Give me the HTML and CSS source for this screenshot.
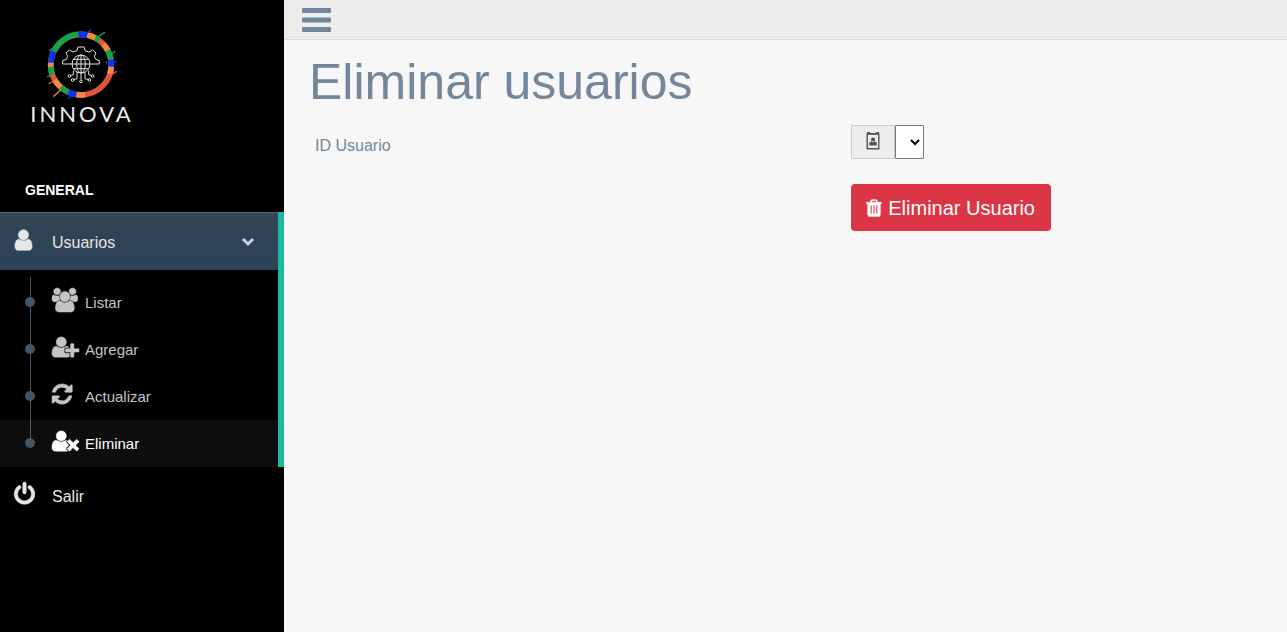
FILE: index.html
```html
<!DOCTYPE html>
<html lang="es">
<head>
<meta charset="utf-8">
<meta name="viewport" content="width=device-width, initial-scale=1">
<title>Eliminar usuarios</title>
<link rel="stylesheet" href="styles.css">
</head>
<body>
<div class="layout">
  <aside class="sidebar">
    <a class="brand" href="#">
      <svg class="brand-mark" viewBox="0 0 228 228" aria-hidden="true">
        <g class="ring" transform="rotate(-90 111 110)">
          <circle cx="111" cy="110" r="91" stroke="#e0553a"/>
          <circle cx="111" cy="110" r="91" stroke="#15a34a" pathLength="360" stroke-dasharray="60 300" stroke-dashoffset="-295"/>
          <circle cx="111" cy="110" r="91" stroke="#0b35f0" pathLength="360" stroke-dasharray="18 342" stroke-dashoffset="-355"/>
          <circle cx="111" cy="110" r="91" stroke="#0b35f0" pathLength="360" stroke-dasharray="12 348"/>
          <circle cx="111" cy="110" r="91" stroke="#ee8a45" pathLength="360" stroke-dasharray="17 343" stroke-dashoffset="-12"/>
          <circle cx="111" cy="110" r="91" stroke="#15a34a" pathLength="360" stroke-dasharray="9 351" stroke-dashoffset="-28"/>
          <circle cx="111" cy="110" r="91" stroke="#ee8a45" pathLength="360" stroke-dasharray="14 346" stroke-dashoffset="-48"/>
          <circle cx="111" cy="110" r="91" stroke="#15a34a" pathLength="360" stroke-dasharray="18 342" stroke-dashoffset="-62"/>
          <circle cx="111" cy="110" r="91" stroke="#0b35f0" pathLength="360" stroke-dasharray="14 346" stroke-dashoffset="-80"/>
          <circle cx="111" cy="110" r="91" stroke="#ee8a45" pathLength="360" stroke-dasharray="14 346" stroke-dashoffset="-94"/>
          <circle cx="111" cy="110" r="91" stroke="#ee8a45" pathLength="360" stroke-dasharray="17 343" stroke-dashoffset="-172"/>
          <circle cx="111" cy="110" r="91" stroke="#0b35f0" pathLength="360" stroke-dasharray="16 344" stroke-dashoffset="-189"/>
          <circle cx="111" cy="110" r="91" stroke="#15a34a" pathLength="360" stroke-dasharray="17 343" stroke-dashoffset="-205"/>
          <circle cx="111" cy="110" r="91" stroke="#ee8a45" pathLength="360" stroke-dasharray="18 342" stroke-dashoffset="-222"/>
          <circle cx="111" cy="110" r="91" stroke="#15a34a" pathLength="360" stroke-dasharray="16 344" stroke-dashoffset="-251"/>
          <circle cx="111" cy="110" r="91" stroke="#ee8a45" pathLength="360" stroke-dasharray="8 352" stroke-dashoffset="-266"/>
          <circle cx="111" cy="110" r="91" stroke="#0b35f0" pathLength="360" stroke-dasharray="22 338" stroke-dashoffset="-274"/>
        </g>
        <g class="splash">
          <path stroke="#0b35f0" d="M124 20 140 6M73 212 86 198M202 108 217 99"/>
          <path stroke="#15a34a" d="M160 28 182 13M200 80 213 70M17 67 28 60M11 146 20 142"/>
          <path stroke="#ee8a45" d="M29 205 50 186"/>
          <path stroke="#e0553a" d="M15 167 28 159M202 140 217 131"/>
        </g>
        <g class="device">
          <path d="M56 108V98l11-4 4-9-5-10 10-9 11 6 12-4 3-11h18l3 11 12 4 11-6 10 9-5 10 4 9 11 4v10H139M56 108H84"/>
          <circle cx="111" cy="108" r="27"/>
          <ellipse cx="111" cy="108" rx="13" ry="27"/>
          <path d="M111 81v73M84 108h54M88 94h46M88 122h46M99 132v20l-12 3M88 128v12l-10 3M123 132v20l12 3M134 128v12l10 3"/>
          <circle cx="76" cy="144" r="4"/><circle cx="86" cy="156" r="4"/><circle cx="111" cy="160" r="4"/><circle cx="136" cy="156" r="4"/><circle cx="146" cy="144" r="4"/>
        </g>
        <circle cx="187" cy="102" r="2" fill="#18c5d8"/>
      </svg>
      <span class="brand-name">INNOVA</span>
    </a>

    <nav class="menu">
      <h3 class="menu-title">General</h3>
      <ul class="menu-list">
        <li class="menu-group">
          <a class="menu-link menu-link-active" href="#">
            <svg class="icon icon-user" viewBox="192 0 1408 1792" aria-hidden="true"><path d="M1536 1399q0 109-62.500 187t-150.500 78h-854q-88 0-150.500-78t-62.500-187q0-85 8.500-160.500t31.500-152 58.500-131 94-89 134.500-34.500q131 128 313 128t313-128q76 0 134.500 34.500t94 89 58.500 131 31.500 152 8.500 160.500zm-256-887q0 159-112.500 271.500t-271.500 112.500-271.500-112.500-112.500-271.500 112.500-271.500 271.500-112.500 271.500 112.500 112.500 271.500z"/></svg>
            <span class="menu-text">Usuarios</span>
            <svg class="chevron" viewBox="0 0 14 10" aria-hidden="true"><path d="M2 2l5 5 5-5"/></svg>
          </a>
          <ul class="submenu">
            <li><a class="submenu-link" href="#">
              <svg class="icon" viewBox="-64 0 1920 1792" preserveAspectRatio="xMinYMin meet" aria-hidden="true"><path d="M529 896q-162 5-265 128h-134q-82 0-138-40.500t-56-118.500q0-353 124-353 6 0 43.500 21t97.500 42.500 119 21.500q67 0 133-23-5 37-5 66 0 139 81 256zm1071 637q0 120-73 189.500t-194 69.500h-874q-121 0-194-69.500t-73-189.500q0-53 3.500-103.500t14-109 26.500-108.500 43-97.500 62-81 85.500-53.500 111.500-20q10 0 43 21.500t73 48 107 48 135 21.500 135-21.500 107-48 73-48 43-21.500q61 0 111.500 20t85.500 53.500 62 81 43 97.500 26.500 108.500 14 109 3.500 103.500zm-1024-1277q0 106-75 181t-181 75-181-75-75-181 75-181 181-75 181 75 75 181zm704 384q0 159-112.500 271.500t-271.500 112.500-271.500-112.500-112.500-271.500 112.500-271.500 271.500-112.500 271.500 112.500 112.500 271.500zm576 225q0 78-56 118.500t-138 40.500h-134q-103-123-265-128 81-117 81-256 0-29-5-66 66 23 133 23 59 0 119-21.500t97.500-42.500 43.500-21q124 0 124 353zm-128-609q0 106-75 181t-181 75-181-75-75-181 75-181 181-75 181 75 75 181z"/></svg>
              <span>Listar</span></a></li>
            <li><a class="submenu-link" href="#">
              <svg class="icon" viewBox="0 0 2048 1792" aria-hidden="true"><path d="M704 896q-159 0-271.500-112.500t-112.500-271.500 112.500-271.500 271.500-112.500 271.500 112.500 112.500 271.500-112.500 271.500-271.500 112.500zm960 128h352q13 0 22.500 9.500t9.500 22.500v192q0 13-9.500 22.500t-22.500 9.500h-352v352q0 13-9.500 22.500t-22.500 9.500h-192q-13 0-22.500-9.500t-9.500-22.500v-352h-352q-13 0-22.500-9.500t-9.500-22.500v-192q0-13 9.500-22.500t22.500-9.500h352v-352q0-13 9.500-22.500t22.500-9.500h192q13 0 22.500 9.500t9.500 22.500v352zm-736 224q0 52 38 90t90 38h256v238q-68 50-171 50h-874q-121 0-194-69t-73-190q0-53 3.500-103.500t14-109 26.500-108.500 43-97.500 62-81 85.500-53.500 111.500-20q19 0 39 17 79 61 154.500 91.500t164.500 30.500 164.500-30.500 154.500-91.500q20-17 39-17 132 0 217 96h-223q-52 0-90 38t-38 90v192z"/></svg>
              <span>Agregar</span></a></li>
            <li><a class="submenu-link" href="#">
              <svg class="icon" viewBox="128 0 2048 1792" aria-hidden="true"><path d="M1639 1056q0 5-1 7-64 268-268 434.500t-478 166.500q-146 0-282.500-55t-243.500-157l-129 129q-19 19-45 19t-45-19-19-45v-448q0-26 19-45t45-19h448q26 0 45 19t19 45-19 45l-137 137q71 66 161 102t187 36q134 0 250-65t186-179q11-17 53-117 8-23 30-23h192q13 0 22.500 9.500t9.500 22.500zm25-800v448q0 26-19 45t-45 19h-448q-26 0-45-19t-19-45 19-45l138-138q-148-137-349-137-134 0-250 65t-186 179q-11 17-53 117-8 23-30 23h-199q-13 0-22.500-9.500t-9.500-22.500v-7q65-268 270-434.500t480-166.500q146 0 284 55.500t245 156.500l130-129q19-19 45-19t45 19 19 45z"/></svg>
              <span>Actualizar</span></a></li>
            <li><a class="submenu-link submenu-link-current" href="#" aria-current="page">
              <svg class="icon" viewBox="0 0 2048 1792" aria-hidden="true"><path d="M704 896q-159 0-271.500-112.500t-112.500-271.500 112.500-271.500 271.500-112.500 271.500 112.500 112.500 271.500-112.500 271.500-271.500 112.500zm1077 320l249 249q9 9 9 23 0 13-9 22l-136 136q-9 9-22 9-14 0-23-9l-249-249-249 249q-9 9-23 9-13 0-22-9l-136-136q-9-9-9-22 0-14 9-23l249-249-249-249q-9-9-9-23 0-13 9-22l136-136q9-9 22-9 14 0 23 9l249 249 249-249q9-9 23-9 13 0 22 9l136 136q9 9 9 22 0 14-9 23zm-498 0l-181 181q-37 37-37 91 0 53 37 90l83 83q-21 3-44 3h-874q-121 0-194-69t-73-190q0-53 3.500-103.500t14-109 26.500-108.500 43-97.500 62-81 85.500-53.500 111.500-20q19 0 39 17 79 61 154.500 91.500t164.500 30.500 164.500-30.500 154.500-91.500q20-17 39-17 25 0 50 4l-10 18q-37 37-37 90 0 54 37 91z"/></svg>
              <span>Eliminar</span></a></li>
          </ul>
        </li>
        <li>
          <a class="menu-link" href="#">
            <svg class="icon" viewBox="128 0 1536 1792" aria-hidden="true"><path d="M1664 896q0 156-61 298t-164 245-245 164-298 61-298-61-245-164-164-245-61-298q0-182 80.500-343t226.500-270q43-32 95.500-25t83.500 50q32 42 24.500 94.500t-49.500 84.500q-98 74-151.500 181t-53.500 228q0 104 40.500 198.500t109.500 163.500 163.500 109.500 198.500 40.500 198.500-40.500 163.500-109.500 109.500-163.500 40.500-198.500q0-121-53.500-228t-151.500-181q-42-32-49.500-84.500t24.500-94.500q31-43 84-50t95 25q146 109 226.500 270t80.500 343zm-640-768v640q0 52-38 90t-90 38-90-38-38-90v-640q0-52 38-90t90-38 90 38 38 90z"/></svg>
            <span class="menu-text">Salir</span>
          </a>
        </li>
      </ul>
    </nav>
  </aside>

  <div class="page">
    <header class="topbar">
      <button class="toggle" type="button" aria-label="Menú">
        <svg class="toggle-icon" viewBox="0 0 29 24" aria-hidden="true"><rect width="29" height="5" rx="1"/><rect y="9.500" width="29" height="5" rx="1"/><rect y="19" width="29" height="5" rx="1"/></svg>
      </button>
    </header>
    <main class="content">
      <h1 class="title">Eliminar usuarios</h1>
      <form class="form">
        <label class="form-label" for="user-id">ID Usuario</label>
        <div class="input-group">
          <span class="addon">
            <svg class="badge-icon" viewBox="0 0 14 18" aria-hidden="true"><path class="badge-frame" d="M1.200 2h11.600v14.800H1.200z"/><path d="M1 0h3v1h6V0h3v2.500H1z"/><circle cx="7" cy="7.500" r="2.100"/><path d="M3.200 13.500V11.500q0-2 2-2 1.800 1.300 3.600 0 2 0 2 2v2z"/></svg>
          </span>
          <select class="select" id="user-id"></select>
        </div>
        <button class="delete" type="button">
          <svg class="trash-icon" viewBox="192 0 1408 1792" aria-hidden="true"><path d="M704 1376v-704q0-14-9-23t-23-9h-64q-14 0-23 9t-9 23v704q0 14 9 23t23 9h64q14 0 23-9t9-23zm256 0v-704q0-14-9-23t-23-9h-64q-14 0-23 9t-9 23v704q0 14 9 23t23 9h64q14 0 23-9t9-23zm256 0v-704q0-14-9-23t-23-9h-64q-14 0-23 9t-9 23v704q0 14 9 23t23 9h64q14 0 23-9t9-23zm-544-992h448l-48-117q-7-9-17-11h-317q-10 2-17 11zm928 32v64q0 14-9 23t-23 9h-96v948q0 83-47 143.500t-113 60.500h-832q-66 0-113-58.500t-47-141.500v-952h-96q-14 0-23-9t-9-23v-64q0-14 9-23t23-9h309l70-167q15-37 54-63t79-26h320q40 0 79 26t54 63l70 167h309q14 0 23 9t9 23z"/></svg>
          Eliminar Usuario
        </button>
      </form>
    </main>
  </div>
</div>
</body>
</html>
```

FILE: styles.css
```css
* {
  box-sizing: border-box;
}

body {
  margin: 0;
  font-family: "Liberation Sans", Arial, sans-serif;
  font-size: 16px;
  line-height: 24px;
  color: #73879c;
  background: #f7f7f7;
}

ul {
  margin: 0;
  padding: 0;
  list-style: none;
}

a {
  color: inherit;
  text-decoration: none;
}

svg {
  display: block;
  flex: none;
  fill: currentColor;
}

.layout {
  display: flex;
  min-height: 100vh;
}

/* Sidebar */

.sidebar {
  flex: 0 0 284px;
  background: #000;
  color: #e7e7e7;
}

.brand {
  display: flex;
  flex-direction: column;
  align-items: center;
  width: 108px;
  margin-left: 28px;
  padding-top: 28px;
}

.brand-mark {
  width: 76px;
  height: 76px;
}

.ring circle {
  fill: none;
  stroke-width: 17;
}

.splash {
  stroke-width: 4;
  stroke-linecap: round;
}

.device {
  fill: none;
  stroke: #e4e4e4;
  stroke-width: 3;
}

.brand-name {
  font-family: Lato, "Liberation Sans", sans-serif;
  font-size: 22px;
  font-weight: 400;
  letter-spacing: 3px;
  line-height: 20px;
  color: #eee;
}

.menu-title {
  margin: 0;
  padding: 54px 25px 10px;
  font-size: 14px;
  line-height: 24px;
  text-transform: uppercase;
  color: #fff;
}

.menu-group {
  border-right: 6px solid #1abb9c;
}

.menu-link {
  display: flex;
  align-items: center;
  height: 58px;
  padding: 0 23px 0 14px;
}

.menu-link-active {
  border-top: 1px solid #52677b;
  background: linear-gradient(#334556, #2c4257);
}

.icon {
  height: 24px;
  overflow: visible;
  stroke: currentColor;
  stroke-width: 40;
}

.menu-link .icon {
  width: 21px;
  margin-bottom: 4px;
}

.menu-link .icon-user {
  width: 19px;
  margin-right: 2px;
}

.menu-text {
  flex: 1;
  margin-left: 17px;
  padding-top: 2px;
}

.chevron {
  width: 14px;
  height: 10px;
  fill: none;
  stroke: #c4cfda;
  stroke-width: 3;
}

.submenu {
  padding-top: 9px;
  background: linear-gradient(#425668, #425668) 30px 7px / 1px 166px no-repeat;
}

.submenu-link {
  display: flex;
  align-items: center;
  height: 47px;
  padding-left: 25px;
  font-size: 15px;
  color: #c4c4c4;
}

.submenu-link::before {
  content: "";
  width: 10px;
  height: 10px;
  margin: 0 17px 2px 0;
  border-radius: 50%;
  background: #425668;
}

.submenu-link .icon {
  width: 27px;
  margin: 0 6px 5px 0;
}

.submenu-link-current {
  color: #fff;
  background: rgba(255, 255, 255, 0.05);
}

/* Page */

.page {
  flex: 1;
  min-width: 0;
}

.topbar {
  display: flex;
  align-items: center;
  height: 40px;
  padding-left: 18px;
  border-bottom: 1px solid #dadada;
  background: #ededed;
}

.toggle {
  padding: 0;
  border: 0;
  background: none;
  color: #73879c;
  cursor: pointer;
}

.toggle-icon {
  width: 29px;
  height: 24px;
}

.title {
  margin: 0;
  padding: 12px 25px 13px;
  font-size: 50px;
  font-weight: 400;
  line-height: 60px;
}

.form {
  display: grid;
  grid-template-columns: 16fr 13fr;
  row-gap: 25px;
  padding-left: 31px;
}

.form-label {
  padding-top: 9px;
}

.input-group {
  display: flex;
}

.addon {
  display: flex;
  justify-content: center;
  width: 44px;
  height: 34px;
  padding-top: 6px;
  border: 1px solid #ccc;
  background: #eee;
  color: #555;
}

.badge-icon {
  width: 14px;
  height: 18px;
}

.badge-frame {
  fill: none;
  stroke: currentColor;
  stroke-width: 1.4;
}

.select {
  width: 29px;
  height: 34px;
  padding: 0 4px 0 0;
  border: 1px solid #767676;
  border-radius: 1px;
  background: #fff;
  color: #000;
  font: inherit;
}

.delete {
  display: flex;
  grid-column: 2;
  align-items: center;
  justify-self: start;
  gap: 6px;
  height: 47px;
  padding: 0 16px 0 15px;
  border: 0;
  border-radius: 4px;
  background: #dc3545;
  color: #fff;
  font: inherit;
  font-size: 20px;
  cursor: pointer;
}

.trash-icon {
  width: 16px;
  height: 20px;
  stroke: currentColor;
  stroke-width: 30;
}
```
